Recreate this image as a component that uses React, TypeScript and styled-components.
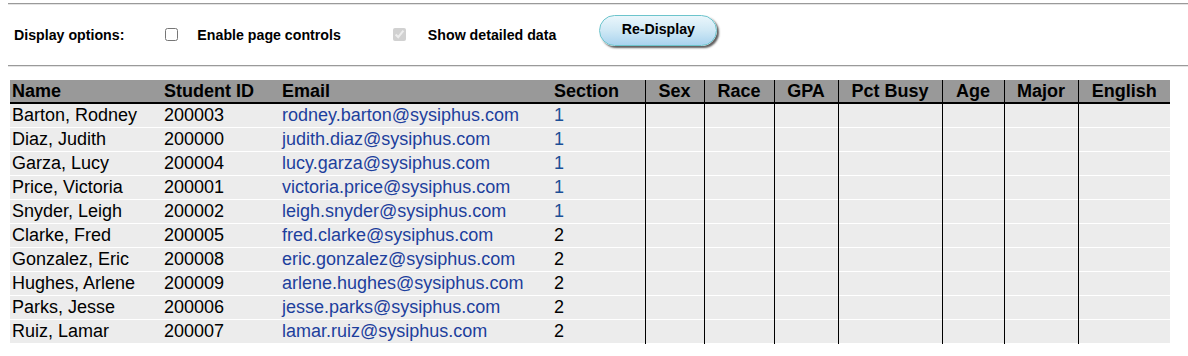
import React from "react";
import styled, { createGlobalStyle } from "styled-components";

const GlobalStyle = createGlobalStyle`
  body {
    margin: 0;
    background: #fff;
    font-family: "Liberation Sans", Arial, sans-serif;
    color: #000;
  }
`;

const Page = styled.div`
  padding: 3px 0 0 8px;
`;

const Rule = styled.div`
  height: 0;
  border-top: 1px solid #9a9a9a;
  border-bottom: 1px solid #e4e4e4;
`;

const OptionsBar = styled.div`
  display: flex;
  align-items: center;
  height: 60px;
  padding-left: 6px;
  font-size: 14.2px;
  font-weight: bold;
`;

const OptionLabel = styled.span<{ gap?: number }>`
  margin-left: ${({ gap }) => gap ?? 0}px;
  white-space: nowrap;
`;

const Check = styled.input<{ gap: number }>`
  width: 13px;
  height: 13px;
  margin: 0 0 0 ${({ gap }) => gap}px;
  position: relative;
  top: -1px;
`;

const RedisplayButton = styled.button`
  margin-left: 43px;
  width: 118px;
  height: 31px;
  position: relative;
  top: -5px;
  border-radius: 16px;
  border: 1px solid #6cc4cc;
  background: linear-gradient(to bottom, #eaf6fb 0%, #cfe8f5 50%, #a9d3ee 100%);
  box-shadow: 2px 2px 2px rgba(40, 40, 40, 0.75);
  font-family: "Liberation Sans", Arial, sans-serif;
  font-size: 14.2px;
  font-weight: bold;
  color: #000;
  padding: 0 0 2px;
  cursor: pointer;
`;

const TableWrap = styled.div`
  padding: 13px 0 0 2px;
`;

const Table = styled.table`
  width: 1160px;
  table-layout: fixed;
  border-collapse: collapse;
  font-size: 18px;
`;

const HeadCell = styled.th<{ ruled?: boolean }>`
  background: #999999;
  font-weight: bold;
  text-align: ${({ ruled }) => (ruled ? "center" : "left")};
  padding: 0 2px;
  height: 22px;
  line-height: 22px;
  border-bottom: 2px solid #000;
  border-left: ${({ ruled }) => (ruled ? "1px solid #000" : "none")};
  white-space: nowrap;
  overflow: hidden;
`;

const Row = styled.tr`
  background: #ececec;
  border-bottom: 1px solid #fff;
`;

const Cell = styled.td<{ ruled?: boolean; tone?: string }>`
  padding: 0 2px;
  height: 23px;
  line-height: 23px;
  border-left: ${({ ruled }) => (ruled ? "1px solid #000" : "none")};
  color: ${({ tone }) => tone ?? "#000"};
  white-space: nowrap;
  overflow: hidden;
`;

const EmailLink = styled.a`
  color: #1d3f9d;
  text-decoration: none;
`;

const columns = [
  { key: "name", title: "Name", width: 152 },
  { key: "id", title: "Student ID", width: 118 },
  { key: "email", title: "Email", width: 272 },
  { key: "section", title: "Section", width: 93 },
  { key: "sex", title: "Sex", width: 59, ruled: true },
  { key: "race", title: "Race", width: 70, ruled: true },
  { key: "gpa", title: "GPA", width: 64, ruled: true },
  { key: "busy", title: "Pct Busy", width: 104, ruled: true },
  { key: "age", title: "Age", width: 62, ruled: true },
  { key: "major", title: "Major", width: 74, ruled: true },
  { key: "english", title: "English", width: 92, ruled: true },
];

const students = [
  { name: "Barton, Rodney", id: "200003", email: "rodney.barton@sysiphus.com", section: 1 },
  { name: "Diaz, Judith", id: "200000", email: "judith.diaz@sysiphus.com", section: 1 },
  { name: "Garza, Lucy", id: "200004", email: "lucy.garza@sysiphus.com", section: 1 },
  { name: "Price, Victoria", id: "200001", email: "victoria.price@sysiphus.com", section: 1 },
  { name: "Snyder, Leigh", id: "200002", email: "leigh.snyder@sysiphus.com", section: 1 },
  { name: "Clarke, Fred", id: "200005", email: "fred.clarke@sysiphus.com", section: 2 },
  { name: "Gonzalez, Eric", id: "200008", email: "eric.gonzalez@sysiphus.com", section: 2 },
  { name: "Hughes, Arlene", id: "200009", email: "arlene.hughes@sysiphus.com", section: 2 },
  { name: "Parks, Jesse", id: "200006", email: "jesse.parks@sysiphus.com", section: 2 },
  { name: "Ruiz, Lamar", id: "200007", email: "lamar.ruiz@sysiphus.com", section: 2 },
];

const emptyCols = columns.filter((c) => c.ruled);

export default function App() {
  return (
    <>
      <GlobalStyle />
      <Page>
        <Rule />
        <OptionsBar>
          <OptionLabel>Display options:</OptionLabel>
          <Check type="checkbox" gap={41} />
          <OptionLabel gap={19}>Enable page controls</OptionLabel>
          <Check type="checkbox" gap={52} checked disabled readOnly />
          <OptionLabel gap={22}>Show detailed data</OptionLabel>
          <RedisplayButton>Re-Display</RedisplayButton>
        </OptionsBar>
        <Rule />
        <TableWrap>
          <Table>
            <colgroup>
              {columns.map((c) => (
                <col key={c.key} style={{ width: c.width }} />
              ))}
            </colgroup>
            <thead>
              <tr>
                {columns.map((c) => (
                  <HeadCell key={c.key} ruled={c.ruled}>
                    {c.title}
                  </HeadCell>
                ))}
              </tr>
            </thead>
            <tbody>
              {students.map((s) => (
                <Row key={s.id}>
                  <Cell>{s.name}</Cell>
                  <Cell>{s.id}</Cell>
                  <Cell>
                    <EmailLink href={`mailto:${s.email}`}>{s.email}</EmailLink>
                  </Cell>
                  <Cell tone={s.section === 1 ? "#1b4f96" : undefined}>{s.section}</Cell>
                  {emptyCols.map((c) => (
                    <Cell key={c.key} ruled />
                  ))}
                </Row>
              ))}
            </tbody>
          </Table>
        </TableWrap>
      </Page>
    </>
  );
}
